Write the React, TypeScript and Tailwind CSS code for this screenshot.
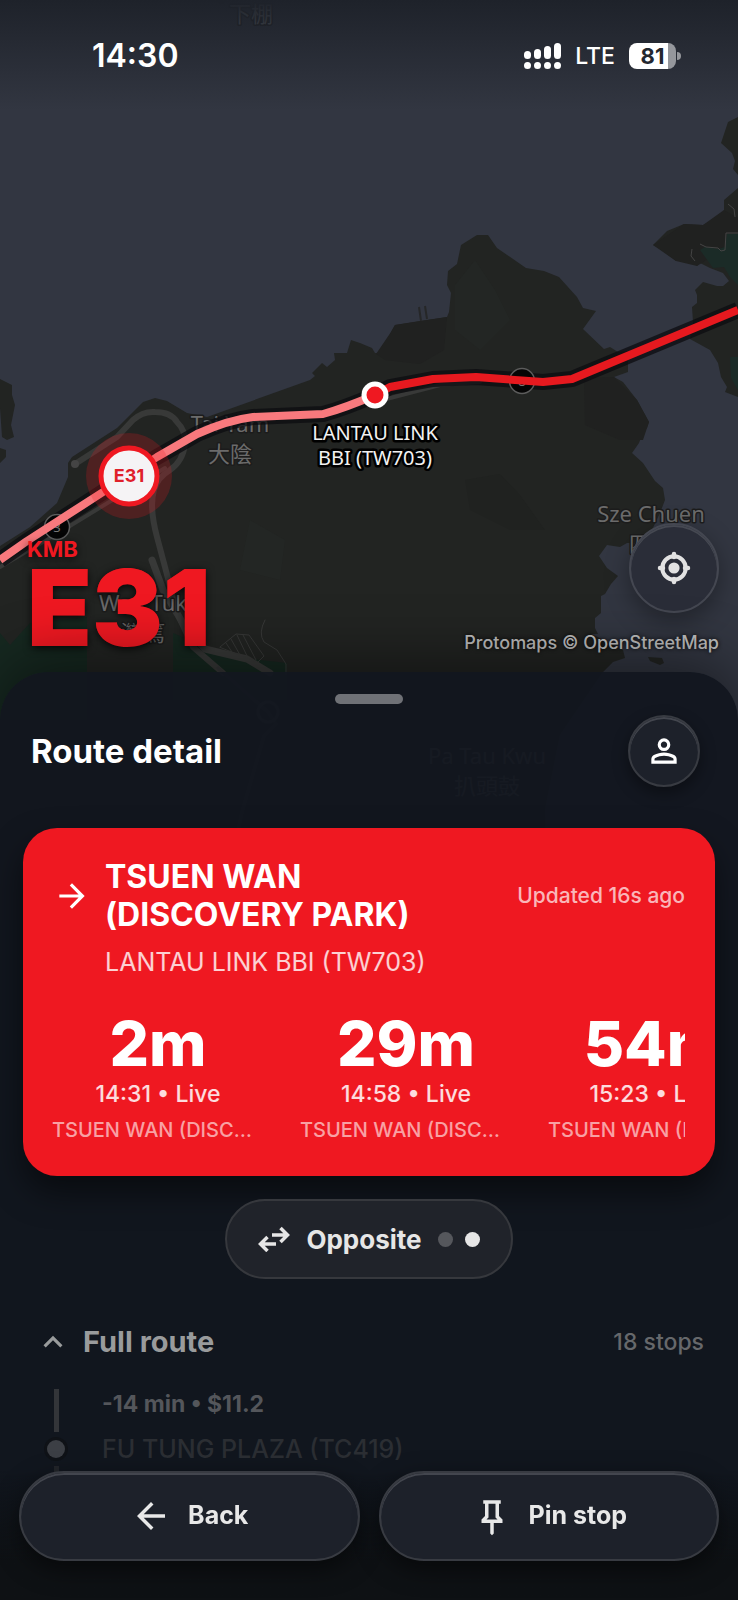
import type { ReactNode } from 'react';
import { MdArrowBack, MdArrowForward, MdKeyboardArrowUp } from 'react-icons/md';

interface Arrival {
  eta: string;
  time: string;
  destination: string;
}

const arrivals: Arrival[] = [
  { eta: '2m', time: '14:31', destination: 'TSUEN WAN (DISCOVERY PARK)' },
  { eta: '29m', time: '14:58', destination: 'TSUEN WAN (DISCOVERY PARK)' },
  { eta: '54m', time: '15:23', destination: 'TSUEN WAN (DISCOVERY PARK)' },
];

const PersonIcon = () => (
  <svg viewBox="0 -960 960 960" className="h-[38px] w-[38px]" fill="currentColor" aria-hidden="true">
    <path d="M480-480q-66 0-113-47t-47-113q0-66 47-113t113-47q66 0 113 47t47 113q0 66-47 113t-113 47ZM160-160v-112q0-34 17.5-62.5T224-378q62-31 126-46.5T480-440q66 0 130 15.5T736-378q29 15 46.5 43.5T800-272v112H160Zm80-80h480v-32q0-11-5.5-20T700-306q-54-27-109-40.5T480-360q-56 0-111 13.5T260-306q-9 5-14.5 14t-5.5 20v32Zm240-320q33 0 56.5-23.5T560-640q0-33-23.5-56.5T480-720q-33 0-56.5 23.5T400-640q0 33 23.5 56.5T480-560Z" />
  </svg>
);

const PinIcon = () => (
  <svg viewBox="0 -960 960 960" className="h-[42px] w-[42px]" fill="currentColor" aria-hidden="true">
    <path d="m640-480 80 80v80H520v240l-40 40-40-40v-240H240v-80l80-80v-280h-40v-80h400v80h-40v280Zm-286 80h252l-46-46v-314H400v314l-46 46Z" />
  </svg>
);

const SwapIcon = () => (
  <svg viewBox="0 0 32 26" className="h-[26px] w-8" fill="none" stroke="currentColor" strokeWidth="3.500" aria-hidden="true">
    <path d="M14 9h15M22.500 2 29.500 9l-7 7" />
    <path d="M18 18H3M9.500 11 2.500 18l7 7" />
  </svg>
);

const LocateIcon = () => (
  <svg viewBox="0 0 34 34" className="h-[34px] w-[34px]" fill="none" stroke="currentColor" aria-hidden="true">
    <circle cx="17" cy="17" r="11.700" strokeWidth="4" />
    <circle cx="17" cy="17" r="5.600" fill="currentColor" stroke="none" />
    <path d="M17 3v3M17 28v3M3 17h3M28 17h3" strokeWidth="4.500" strokeLinecap="round" />
  </svg>
);

const SignalIcon = () => (
  <svg viewBox="0 0 37 26" className="h-[26px] w-[37px]" fill="#fff" aria-hidden="true">
    <rect x="0" y="8" width="7" height="8" rx="3.500" />
    <rect x="10" y="6" width="7" height="10" rx="3.500" />
    <rect x="20" y="3" width="7" height="13" rx="3.500" />
    <rect x="30" y="0" width="7" height="16" rx="3.500" />
    <circle cx="3.500" cy="22.500" r="3.500" />
    <circle cx="13.500" cy="22.500" r="3.500" />
    <circle cx="23.500" cy="22.500" r="3.500" />
    <circle cx="33.500" cy="22.500" r="3.500" />
  </svg>
);

interface PlaceProps {
  x: number;
  y: number;
  name?: string;
  local?: string;
  fill?: string;
}

const Place = ({ x, y, name, local, fill = '#6b6b6b' }: PlaceProps) => (
  <g textAnchor="middle" fontSize="22" fill={fill} stroke="#1c1c1c" strokeWidth="3" strokeLinejoin="round" paintOrder="stroke">
    {name ? <text x={x} y={y}>{name}</text> : null}
    {local ? <text x={x} y={y + 30}>{local}</text> : null}
  </g>
);

const RouteMap = () => (
  <svg
    viewBox="0 0 738 920"
    preserveAspectRatio="xMidYMin slice"
    className="absolute inset-x-0 top-0 h-[920px] w-full font-['Noto_Sans','Noto_Sans_CJK_TC',sans-serif]"
    role="img"
    aria-label="Map of route E31"
  >
    <rect width="738" height="920" fill="#323641" />
    <g fill="#222422">
      <path d="M0 546 30 527 57 503 68 477V463L72 457 117 428 143 402 155 398 167 401 187 413 207 417 310 380 315 376 312 373 322 363 327 367 335 360 334 353H347L351 340 360 343 372 348 375 353H382L391 332 395 325 420 321 447 317 449 312 451 293 447 285 448 271 457 264 461 245 477 235H488L497 248 526 268 544 271 559 277 577 297 583 308 596 311 583 329 604 349 610 347 618 352 628 351V372L614 377 623 382 637 400 649 422 647 428 643 432 639 443 632 453 643 463 655 481 663 488 665 500 660 513 652 530 637 543H627L620 547 607 545 599 556 607 568 618 576 611 584 605 594 601 596V613L595 618V628L598 634H588L575 630 582 623 587 623V632L604 640 623 650 625 658 613 662 603 672 560 735 545 810 550 920H0Z" />
      <path d="M738 117 728 122 721 143 732 153 735 161 733 169 738 175V188L724 200V210L721 216 703 225 684 224 667 231 653 245 660 249 676 261 690 259 697 266 700 263 710 268 723 273 729 281 723 286H717L703 282 695 290 697 295V303L692 307 693 322 690 339 710 350 718 363 721 377 727 387 725 392 738 397Z" />
      <path d="M0 379 12 385V395L15 405 11 425 14 437 7 440 2 437 0 408ZM0 448 6 450V457L0 463ZM208 0 222 4 228 0ZM648 657 662 658 664 663 660 665 650 661Z" />
    </g>
    <path d="M376 354 391 332 395 325 447 317 444 350 420 364 385 360ZM584 378 614 377 637 400 649 422 643 440 620 440 585 425ZM653 245 684 224 703 225 724 210 738 218V234L722 250 697 266 676 261Z" fill="#202120" />
    <path d="M455 285 475 260 495 290 510 320 480 350 455 330ZM250 520 285 540 280 580 240 570Z" fill="#242725" opacity=".5" />
    <path d="M465 480 500 474 520 495 545 530 510 530 470 510Z" fill="#202220" />
    <path d="M700 250 705 247 718 249 725 247 727 234H738V285L730 277 724 267 713 268ZM730 357H738V390L731 378Z" fill="#1b2b27" />
    <path d="M0 633 10 645 30 623 87 617V672 720H0ZM173 633 190 640 215 655 287 663V700H173Z" fill="#162820" />
    <path d="M700 244 706 247 718 248 721 251 725 250 726 233H738M728 204 734 209 735 217M692 249 691 256 695 261" fill="none" stroke="#444" strokeWidth="1" />
    <path d="M419 307 421 321M425 306 427 319" stroke="#262728" strokeWidth="2" />

    <g fill="none" stroke="#383938" strokeLinecap="round" strokeLinejoin="round">
      <path d="M75 464 117 437 133 420Q143 411 155 412 171 412 177 422 186 431 185 444 183 461 170 470 157 478 154 490 149 507 157 537L165 567 177 613 193 647 223 673" strokeWidth="6" />
      <path d="M152 560 163 590 187 630 205 649 247 659 270 673" strokeWidth="7" />
      <path d="M0 567 60 532 165 468M375 402 440 385 480 382" strokeWidth="4" />
      <path d="M218 668 268 712 276 724 264 736 242 812 236 840 200 900M236 840 300 900" stroke="#343536" strokeWidth="3" />
      <path d="M265 620Q258 633 264 642L277 650 286 664V675" strokeWidth="1" />
      <path d="M220 647 236 634 249 635 264 656 258 662ZM226 643 232 652M231 639 240 655M237 635 248 658M243 635 256 660" strokeWidth="1" />
    </g>
    <circle cx="75" cy="464" r="4" fill="#444" />
    <circle cx="268" cy="712" r="10" fill="none" stroke="#3c3d3e" strokeWidth="3" />

    <Place x={251} y={-8} local="下棚" fill="#77797c" />
    <Place x={230} y={432} name="Tai Yam" local="大陰" />
    <Place x={143} y={611} name="Wan Tuk" local="灣篤" />
    <Place x={651} y={522} name="Sze Chuen" local="四轉" />
    <Place x={487} y={764} name="Pa Tau Kwu" local="扒頭鼓" />

    <path
      d="M0 560 27 541 103 492 157 457 197 434Q228 420 253 417L323 414Q345 408 375 395L390 387 433 379 476 377 543 382 572 379 738 310"
      fill="none"
      stroke="#0c0c10"
      strokeOpacity=".75"
      strokeWidth="16"
      strokeLinejoin="round"
    />
    <g fill="#050505" stroke="#5c5c5c" strokeWidth="1.500">
      <circle cx="57" cy="527" r="12.500" />
      <circle cx="522" cy="381" r="12.500" />
    </g>
    <g fill="#777" fontSize="13" textAnchor="middle">
      <text x="57" y="532">3</text>
      <text x="522" y="386">8</text>
    </g>
    <g fill="none" strokeLinejoin="round" strokeWidth="8">
      <path d="M0 560 27 541 103 492 157 457 197 434Q228 420 253 417L323 414Q345 408 375 395" stroke="#f8797d" />
      <path d="M375 395 390 387 433 379 476 377 543 382 572 379 738 310" stroke="#e6191f" />
    </g>

    <circle cx="375" cy="395" r="13.500" fill="#fff" />
    <circle cx="375" cy="395" r="8.500" fill="#ef1821" />
    <g fontSize="20" fill="#f2f2f2" stroke="#000" strokeWidth="5" strokeLinejoin="round" paintOrder="stroke" textAnchor="middle">
      <text x="375" y="440">LANTAU LINK</text>
      <text x="375" y="465">BBI (TW703)</text>
    </g>

    <circle cx="129" cy="476" r="43" fill="#ef1821" opacity=".22" />
    <circle cx="129" cy="476" r="28" fill="#f5f3f5" stroke="#ef1821" strokeWidth="5" />
    <text x="129" y="482" textAnchor="middle" className="font-['Inter',sans-serif] text-lg font-bold" fill="#e0202a">E31</text>
  </svg>
);

const StatusBar = () => (
  <div className="relative flex h-[110px] items-start justify-between bg-linear-to-b from-[#1e222a] to-transparent pt-[38px] pr-[57px] pl-[92px]">
    <span className="text-[32px] leading-9 font-semibold">14:30</span>
    <div className="flex h-9 items-center gap-[14px]">
      <SignalIcon />
      <span className="text-[23px] font-medium">LTE</span>
      <div className="flex items-center gap-px">
        <div className="flex h-[26px] w-[47px] items-center justify-center rounded-lg bg-linear-to-r from-white from-82% to-[#95979c] to-82% text-[22px] leading-none font-bold text-[#23272f]">
          81
        </div>
        <div className="h-2 w-1 rounded-r-full bg-[#95979c]" />
      </div>
    </div>
  </div>
);

const MapOverlay = () => (
  <div className="relative flex items-end justify-between pr-[19px] pb-[17px] pl-[27px]">
    <div className="text-[#ef1821] [text-shadow:0_2px_8px_rgba(0,0,0,0.8)]">
      <p className="text-[22px] leading-6 font-bold">KMB</p>
      <h1 className="bg-linear-to-b from-[#ef1821] from-60% to-[#c0151b] bg-clip-text text-[106px] leading-[94px] font-black">E31</h1>
    </div>
    <div className="flex flex-col items-end gap-[18px]">
      <button
        type="button"
        aria-label="Show my location"
        className="flex h-[90px] w-[90px] items-center justify-center rounded-full border-2 border-[#444751] bg-[#2a2d38] text-[#e2e2e2] shadow-[inset_0_2px_0_#464952,0_8px_24px_rgba(0,0,0,0.35)]"
      >
        <LocateIcon />
      </button>
      <p className="text-lg leading-6 font-medium text-[#bdbdbd] [text-shadow:0_0_4px_#000]">
        <a href="#protomaps">Protomaps</a> © <a href="#openstreetmap">OpenStreetMap</a>
      </p>
    </div>
  </div>
);

const ArrivalColumn = ({ eta, time, destination }: Arrival) => (
  <li className="w-[212px] shrink-0 text-center">
    <p className="text-[62px] leading-[60px] font-extrabold">{eta}</p>
    <p className="mt-[6px] text-[23px] leading-7 font-medium text-white/85">{time} • Live</p>
    <p className="mt-2 truncate text-xl leading-7 font-medium text-white/60">{destination}</p>
  </li>
);

const StopCard = () => (
  <section className="mt-[41px] rounded-[34px] bg-[#ef1821] px-[30px] pt-[30px] pb-8 shadow-[0_16px_32px_rgba(0,0,0,0.5)]">
    <div className="flex items-center">
      <MdArrowForward className="h-[38px] w-[38px] shrink-0" />
      <h3 className="ml-[14px] max-w-[340px] text-[32px] leading-[38px] font-bold">TSUEN WAN (DISCOVERY PARK)</h3>
      <p className="ml-auto text-[21px] font-medium text-white/70">Updated 16s ago</p>
    </div>
    <p className="mt-3 ml-[52px] text-[25px] leading-8 text-white/80">LANTAU LINK BBI (TW703)</p>
    <ul className="-ml-px mt-9 flex gap-9 overflow-hidden">
      {arrivals.map((arrival) => (
        <ArrivalColumn key={arrival.time} {...arrival} />
      ))}
    </ul>
  </section>
);

interface ActionButtonProps {
  icon: ReactNode;
  label: string;
}

const ActionButton = ({ icon, label }: ActionButtonProps) => (
  <button
    type="button"
    className="flex h-[90px] flex-1 items-center justify-center gap-4 rounded-full border-2 border-[#383b42] bg-[#1d212a] text-[25px] font-bold text-[#e8e8e8] shadow-[inset_0_2px_0_#43464e,0_8px_24px_rgba(0,0,0,0.5)]"
  >
    {icon}
    {label}
  </button>
);

export default function App() {
  return (
    <main className="relative flex min-h-screen flex-col overflow-hidden bg-[#12161f] font-['Inter',sans-serif] text-white">
      <RouteMap />
      <header className="flex h-[672px] flex-col justify-between">
        <StatusBar />
        <MapOverlay />
      </header>

      <section className="relative flex-1 rounded-t-[48px] bg-[#12161f]/95 px-[23px] pb-[130px] shadow-[0_-12px_60px_rgba(0,0,0,0.45)]">
        <div className="mx-auto h-8 w-[68px] pt-[22px]">
          <div className="h-[10px] rounded-full bg-[#6f7176]" />
        </div>
        <div className="mt-[11px] flex items-center justify-between pr-[15px] pl-2">
          <h2 className="text-[33px] leading-10 font-bold">Route detail</h2>
          <button
            type="button"
            aria-label="Account"
            className="flex h-[72px] w-[72px] items-center justify-center rounded-full border-2 border-[#383b42] bg-[#1d212a] shadow-[inset_0_2px_0_#43464e,0_6px_16px_rgba(0,0,0,0.4)]"
          >
            <PersonIcon />
          </button>
        </div>

        <StopCard />

        <button
          type="button"
          className="mx-auto mt-[23px] flex h-20 w-[288px] items-center justify-center rounded-full border-2 border-[#36383d] bg-[#20232a] text-[26px] font-bold text-[#e6e6e6]"
        >
          <SwapIcon />
          <span className="ml-4">Opposite</span>
          <span className="ml-4 h-[15px] w-[15px] rounded-full bg-[#55575c]" />
          <span className="ml-3 h-[15px] w-[15px] rounded-full bg-[#e6e6e6]" />
        </button>

        <div className="mt-[43px] flex items-center justify-between px-[11px]">
          <button type="button" aria-expanded="true" className="flex items-center gap-[11px] text-[29px] leading-10 font-bold text-[#999b9c]">
            <MdKeyboardArrowUp className="h-[38px] w-[38px]" />
            Full route
          </button>
          <span className="text-[23px] font-medium text-[#66686b]">18 stops</span>
        </div>

        <ol className="mt-[27px] pl-6">
          <li className="flex gap-[37px]">
            <div className="flex w-[18px] shrink-0 flex-col items-center">
              <span className="h-[43px] w-[5px] bg-[#333539]" />
              <span className="mt-2 h-[18px] w-[18px] rounded-full bg-[#3c3f45] ring-3 ring-[#0f1217]" />
              <span className="mt-2 h-6 w-[5px] bg-[#22252a]" />
            </div>
            <div>
              <p className="text-[23px] leading-[30px] font-bold text-[#54565b]">-14 min • $11.2</p>
              <p className="mt-[14px] text-[25px] leading-8 font-medium text-[#2b2e33]">FU TUNG PLAZA (TC419)</p>
            </div>
          </li>
        </ol>
      </section>

      <nav className="fixed inset-x-0 bottom-0 flex gap-[19px] bg-linear-to-b from-transparent to-[#0e1114] to-70% px-[19px] pb-[39px]">
        <ActionButton icon={<MdArrowBack className="h-[42px] w-[42px]" />} label="Back" />
        <ActionButton icon={<PinIcon />} label="Pin stop" />
      </nav>
    </main>
  );
}
